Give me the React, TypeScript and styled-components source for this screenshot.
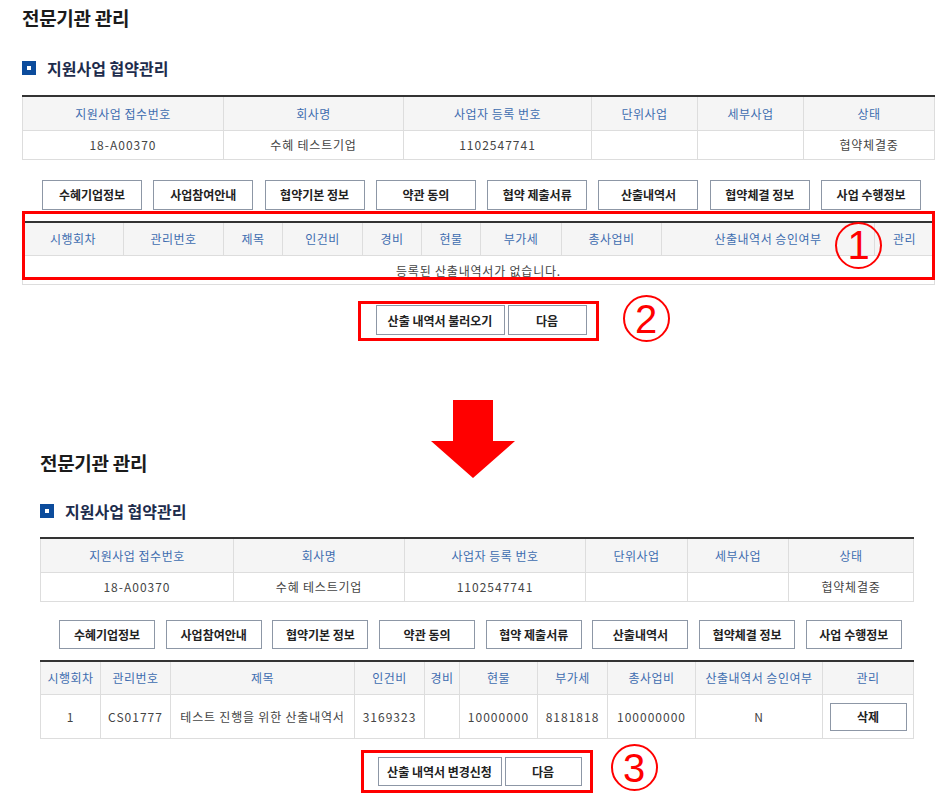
import React from "react";
import styled, { createGlobalStyle } from "styled-components";

const GlobalStyle = createGlobalStyle`
  html, body {
    margin: 0;
    padding: 0;
    background: #fff;
  }
  body {
    font-family: "Noto Sans CJK KR", "Noto Sans", sans-serif;
    color: #333;
  }
  * {
    box-sizing: border-box;
  }
`;

const Page = styled.div`
  position: relative;
  width: 946px;
  height: 800px;
  overflow: hidden;
`;

const Panel = styled.section<{ $left: number; $width: number; $top: number }>`
  margin-left: ${(p) => p.$left}px;
  padding-top: ${(p) => p.$top}px;
  width: ${(p) => p.$width}px;
`;

const PageTitle = styled.h1`
  margin: 0;
  height: 36px;
  line-height: 36px;
  font-size: 19px;
  font-weight: 700;
  color: #1b1b1b;
  letter-spacing: -0.3px;
`;

const SectionTitle = styled.h2<{ $mt: number }>`
  display: flex;
  align-items: center;
  gap: 11px;
  margin: ${(p) => p.$mt}px 0 0;
  height: 24px;
  font-size: 16px;
  font-weight: 700;
  color: #1d2c4c;
`;

const Bullet = styled.span`
  display: flex;
  align-items: center;
  justify-content: center;
  width: 14px;
  height: 14px;
  background: #0c4c9c;

  &::after {
    content: "";
    width: 4px;
    height: 4px;
    background: #fff;
  }
`;

const Grid = styled.table<{ $mt?: number }>`
  width: 100%;
  margin-top: ${(p) => p.$mt ?? 0}px;
  table-layout: fixed;
  border-collapse: collapse;
  border-top: 2px solid #333;
`;

const Col = styled.col<{ $w: number }>`
  width: ${(p) => p.$w}px;
`;

const Th = styled.th`
  height: 34px;
  padding: 0;
  background: #f5f5f5;
  border: 1px solid #ddd;
  font-size: 12px;
  font-weight: 400;
  letter-spacing: 0.5px;
  color: #3e6db0;
  text-align: center;
  white-space: nowrap;
`;

const Td = styled.td<{ $h?: number; $num?: boolean }>`
  height: ${(p) => p.$h ?? 29}px;
  padding: 0;
  border: 1px solid #ddd;
  font-size: 12px;
  letter-spacing: ${(p) => (p.$num ? 1 : 0.8)}px;
  color: #444;
  text-align: center;
  white-space: nowrap;
`;

const TabBar = styled.div<{ $mt: number; $pl: number; $gap: number }>`
  display: flex;
  gap: ${(p) => p.$gap}px;
  margin-top: ${(p) => p.$mt}px;
  padding-left: ${(p) => p.$pl}px;
`;

const Btn = styled.button<{ $w: number; $h: number }>`
  flex: none;
  width: ${(p) => p.$w}px;
  height: ${(p) => p.$h}px;
  padding: 0;
  border: 1px solid #8d97a6;
  background: #fff;
  font-family: "Noto Sans CJK KR", "Noto Sans", sans-serif;
  font-size: 12px;
  font-weight: 700;
  color: #222;
  white-space: nowrap;
`;

const TableWrap = styled.div<{ $mt: number }>`
  position: relative;
  margin-top: ${(p) => p.$mt}px;
`;

const HighlightBox = styled.div`
  position: absolute;
  left: 0;
  right: -1px;
  top: -10px;
  bottom: 5px;
  border: 3px solid #f00;
  pointer-events: none;
`;

const ActionRow = styled.div<{ $mt: number }>`
  display: flex;
  justify-content: center;
  margin-top: ${(p) => p.$mt}px;
`;

const RedFrame = styled.div<{ $pad: string }>`
  position: relative;
  display: flex;
  gap: 3px;
  padding: ${(p) => p.$pad};
  border: 3px solid #f00;
`;

const CircleMark = styled.span<{ $x: string; $y: number }>`
  position: absolute;
  left: ${(p) => p.$x};
  top: ${(p) => p.$y}px;
  display: flex;
  align-items: center;
  justify-content: center;
  width: 47px;
  height: 47px;
  border: 2px solid #f00;
  border-radius: 50%;
  font-family: "Liberation Sans", Arial, sans-serif;
  font-size: 40px;
  line-height: 1;
  color: #f00;
`;

const ArrowMark = styled.svg`
  position: absolute;
  left: 431px;
  top: 400px;
`;

const summaryHead = ["지원사업 접수번호", "회사명", "사업자 등록 번호", "단위사업", "세부사업", "상태"];
const summaryRow = ["18-A00370", "수혜 테스트기업", "1102547741", "", "", "협약체결중"];
const tabs = ["수혜기업정보", "사업참여안내", "협약기본 정보", "약관 동의", "협약 제출서류", "산출내역서", "협약체결 정보", "사업 수행정보"];
const costHead = ["시행회차", "관리번호", "제목", "인건비", "경비", "현물", "부가세", "총사업비", "산출내역서 승인여부", "관리"];

const Summary = ({ widths, mt }: { widths: number[]; mt: number }) => (
  <Grid $mt={mt}>
    <colgroup>
      {widths.map((w, i) => (
        <Col key={i} $w={w} />
      ))}
    </colgroup>
    <thead>
      <tr>
        {summaryHead.map((h) => (
          <Th key={h}>{h}</Th>
        ))}
      </tr>
    </thead>
    <tbody>
      <tr>
        {summaryRow.map((v, i) => (
          <Td key={i} $num={i === 0 || i === 2}>
            {v}
          </Td>
        ))}
      </tr>
    </tbody>
  </Grid>
);

const CostHeader = ({ widths }: { widths: number[] }) => (
  <>
    <colgroup>
      {widths.map((w, i) => (
        <Col key={i} $w={w} />
      ))}
    </colgroup>
    <thead>
      <tr>
        {costHead.map((h) => (
          <Th key={h}>{h}</Th>
        ))}
      </tr>
    </thead>
  </>
);

const App: React.FC = () => {
  return (
    <Page>
      <GlobalStyle />

      <Panel $left={22} $width={912} $top={0}>
        <PageTitle>전문기관 관리</PageTitle>
        <SectionTitle $mt={20}>
          <Bullet />
          지원사업 협약관리
        </SectionTitle>
        <Summary widths={[201, 180, 188, 106, 106, 131]} mt={15} />
        <TabBar $mt={20} $pl={20} $gap={11.3}>
          {tabs.map((t) => (
            <Btn key={t} $w={100} $h={30}>
              {t}
            </Btn>
          ))}
        </TabBar>
        <TableWrap $mt={11}>
          <Grid>
            <CostHeader widths={[101, 100, 59, 80, 59, 59, 81, 100, 213, 60]} />
            <tbody>
              <tr>
                <Td colSpan={10}>등록된 산출내역서가 없습니다.</Td>
              </tr>
            </tbody>
          </Grid>
          <HighlightBox />
          <CircleMark $x="813px" $y={1}>1</CircleMark>
        </TableWrap>
        <ActionRow $mt={16}>
          <RedFrame $pad="1px 9px 3px 15px">
            <Btn $w={129} $h={30}>산출 내역서 불러오기</Btn>
            <Btn $w={79} $h={30}>다음</Btn>
            <CircleMark $x="calc(100% + 27px)" $y={-9}>2</CircleMark>
          </RedFrame>
        </ActionRow>
      </Panel>

      <ArrowMark width="84" height="78" viewBox="0 0 84 78">
        <polygon points="22,0 62,0 62,41 84,41 42,78 0,41 22,41" fill="#f00" />
      </ArrowMark>

      <Panel $left={40} $width={873} $top={104}>
        <PageTitle>전문기관 관리</PageTitle>
        <SectionTitle $mt={18}>
          <Bullet />
          지원사업 협약관리
        </SectionTitle>
        <Summary widths={[193, 171, 181, 102, 101, 125]} mt={14} />
        <TabBar $mt={18} $pl={19} $gap={10.7}>
          {tabs.map((t) => (
            <Btn key={t} $w={96} $h={29}>
              {t}
            </Btn>
          ))}
        </TabBar>
        <TableWrap $mt={11}>
          <Grid>
            <CostHeader widths={[60, 70, 184, 70, 35, 78, 70, 88, 127, 91]} />
            <tbody>
              <tr>
                <Td $h={44} $num>1</Td>
                <Td $h={44} $num>CS01777</Td>
                <Td $h={44}>테스트 진행을 위한 산출내역서</Td>
                <Td $h={44} $num>3169323</Td>
                <Td $h={44}></Td>
                <Td $h={44} $num>10000000</Td>
                <Td $h={44} $num>8181818</Td>
                <Td $h={44} $num>100000000</Td>
                <Td $h={44}>N</Td>
                <Td $h={44}>
                  <Btn $w={77} $h={28}>삭제</Btn>
                </Td>
              </tr>
            </tbody>
          </Grid>
        </TableWrap>
        <ActionRow $mt={11}>
          <RedFrame $pad="4px 8px 4px 14px">
            <Btn $w={124} $h={29}>산출 내역서 변경신청</Btn>
            <Btn $w={77} $h={29}>다음</Btn>
            <CircleMark $x="calc(100% + 21px)" $y={-9}>3</CircleMark>
          </RedFrame>
        </ActionRow>
      </Panel>
    </Page>
  );
};

export default App;
